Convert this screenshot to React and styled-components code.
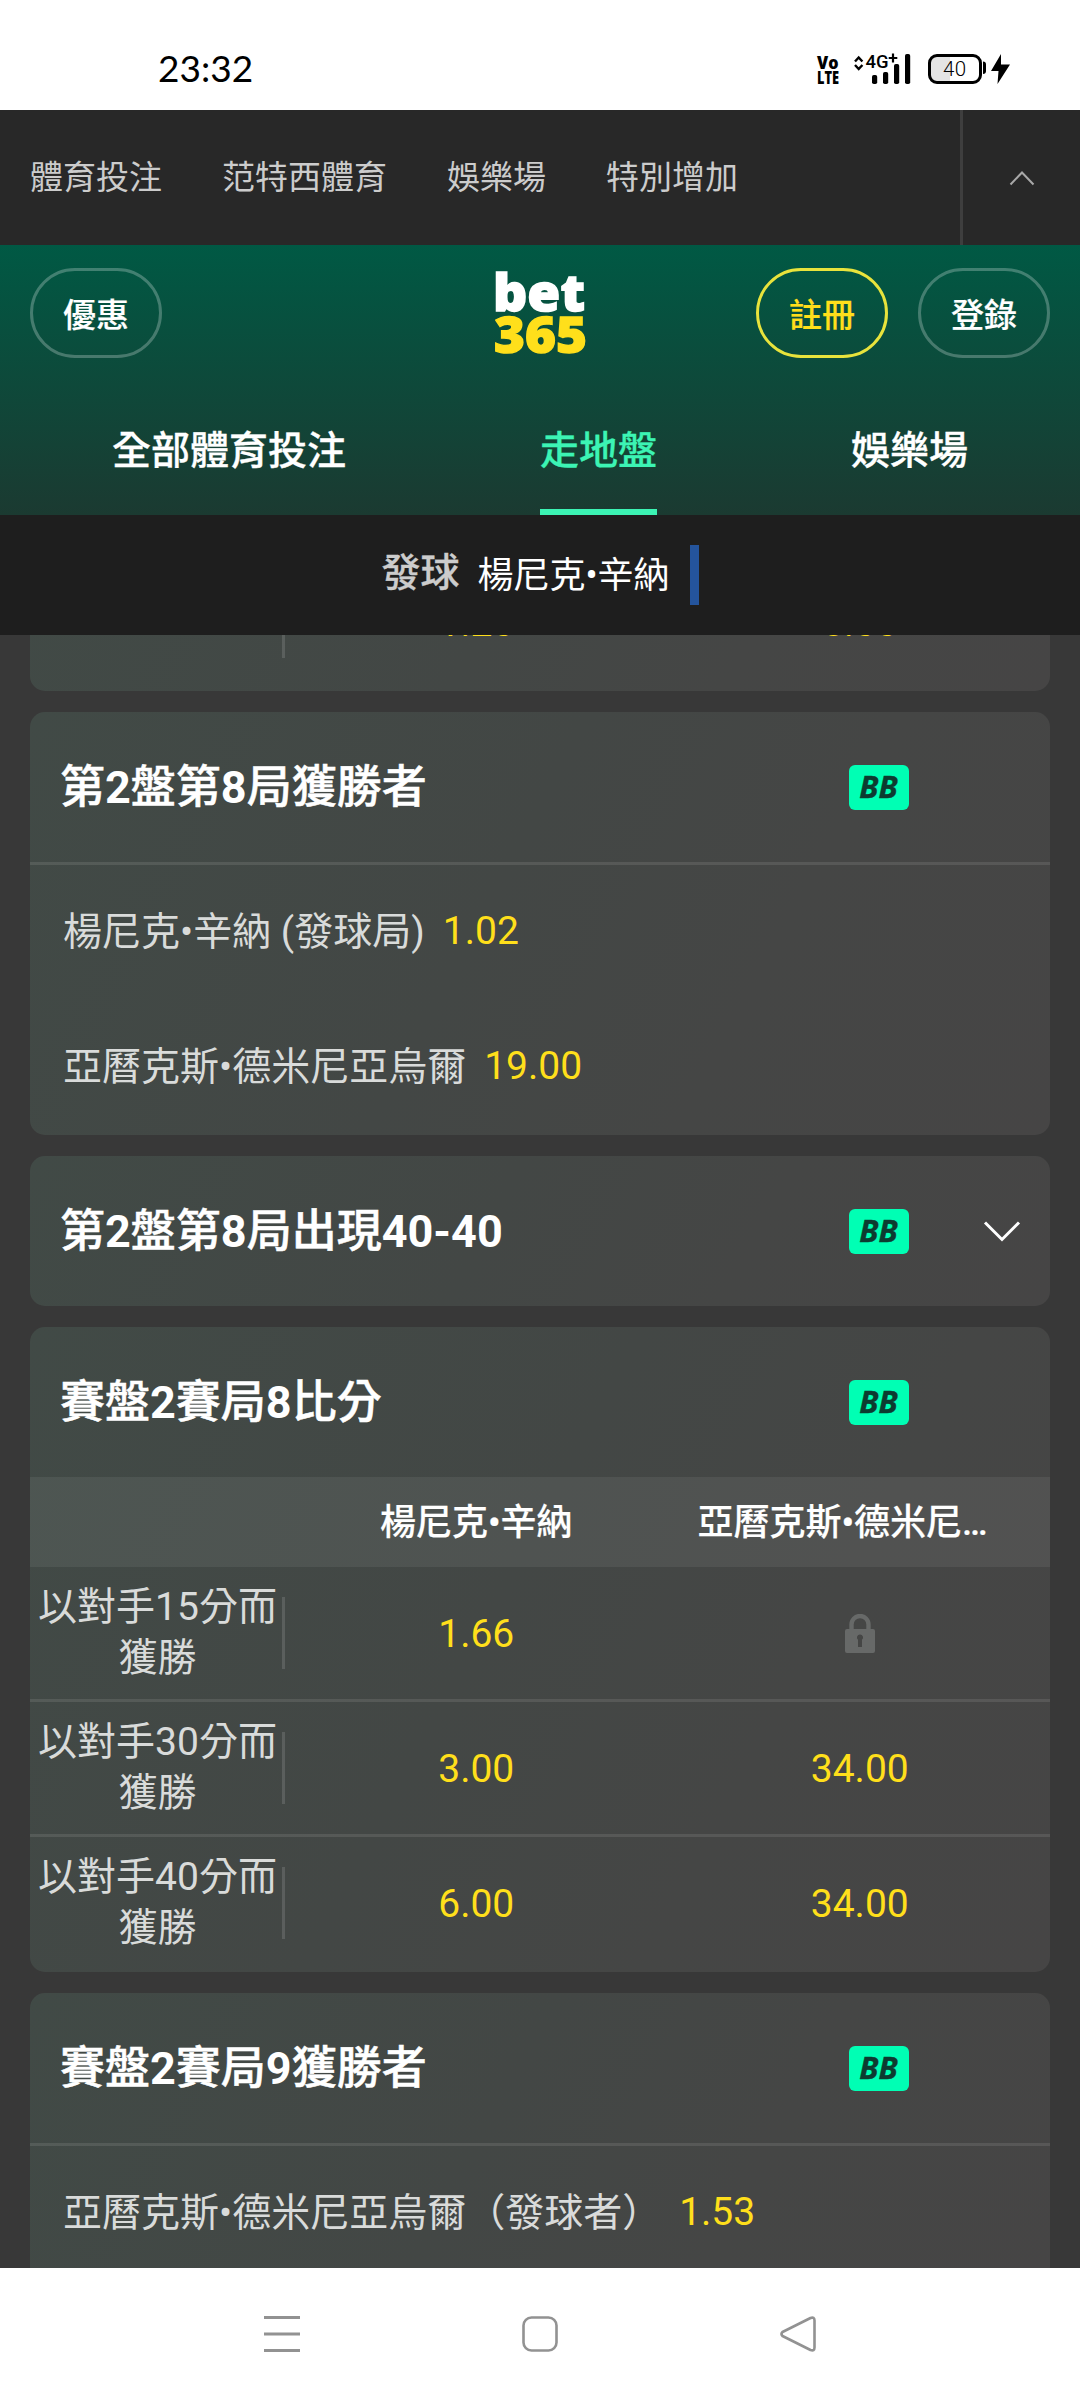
import styled, { createGlobalStyle } from "styled-components";

const topLinks = ["體育投注", "范特西體育", "娛樂場", "特別增加"];

const tabs = [
  { label: "全部體育投注" },
  { label: "走地盤", active: true },
  { label: "娛樂場" },
];

const scoreRows = [
  { label: "以對手15分而獲勝", home: "1.66", away: null },
  { label: "以對手30分而獲勝", home: "3.00", away: "34.00" },
  { label: "以對手40分而獲勝", home: "6.00", away: "34.00" },
];

function StatusIcons() {
  return (
    <StatusSvg width='200' height='36' viewBox='814 51 200 36'>
      <g fontFamily='Open Sans, sans-serif' fontWeight='800' fontSize='18'>
        <text x='817' y='68.500' textLength='21.5' lengthAdjust='spacingAndGlyphs'>
          Vo
        </text>
        <text x='817' y='84' textLength='22' lengthAdjust='spacingAndGlyphs'>
          LTE
        </text>
      </g>
      <g fill='none' stroke='#000' strokeWidth='2.4'>
        <path d='M855 61.5l3.7-4 3.7 4M855 65l3.7 4 3.7-4' />
      </g>
      <text
        x='865.5'
        y='68'
        fontFamily='Roboto, sans-serif'
        fontWeight='500'
        fontSize='19'
        textLength='23'
        lengthAdjust='spacingAndGlyphs'
      >
        4G
      </text>
      <path d='M893 53.5v9M888.7 58h8.6' stroke='#000' strokeWidth='2.2' />
      <rect x='872' y='75' width='5.2' height='9' rx='1.8' />
      <rect x='883' y='72' width='5.2' height='12' rx='1.8' />
      <rect x='894' y='64' width='5.2' height='20' rx='1.8' />
      <rect x='905' y='54' width='5.2' height='30' rx='1.8' />
      <path d='M937 55h13v27h-13a7 7 0 0 1-7-7v-13a7 7 0 0 1 7-7z' fill='#e4e4e4' />
      <rect
        x='929.5'
        y='55.5'
        width='51'
        height='27'
        rx='7.5'
        fill='none'
        stroke='#000'
        strokeWidth='3'
      />
      <path d='M983 61.5q3 0 3 3v6.500q0 3-3 3z' />
      <text
        x='943'
        y='76'
        fontFamily='Roboto, sans-serif'
        fontWeight='300'
        fontSize='20.500'
        textLength='23'
      >
        40
      </text>
      <path d='M1001 54l-10 17h7.500l-1 13 12.500-19.500h-9z' />
    </StatusSvg>
  );
}

function Logo() {
  return (
    <LogoSvg width='96' height='90' viewBox='492 268 96 90'>
      <text
        x='493'
        y='311'
        fontSize='51'
        fill='#fff'
        stroke='#fff'
        textLength='92'
        lengthAdjust='spacingAndGlyphs'
      >
        bet
      </text>
      <text
        x='494'
        y='352.500'
        fontSize='49'
        fill='#ffdf1b'
        stroke='#ffdf1b'
        textLength='93'
        lengthAdjust='spacingAndGlyphs'
      >
        365
      </text>
    </LogoSvg>
  );
}

function LockIcon() {
  return (
    <svg width='30' height='39' viewBox='0 0 30 39' fill='#676968'>
      <path d='M6.500 17v-6.500a8.500 8.500 0 0 1 17 0V17' fill='none' stroke='#676968' strokeWidth='4.400' />
      <path
        fillRule='evenodd'
        d='M2 15h26a2 2 0 0 1 2 2v20a2 2 0 0 1-2 2H2a2 2 0 0 1-2-2V17a2 2 0 0 1 2-2zM15 20.500a3 3 0 0 0-2 5.300V33h4v-7.200a3 3 0 0 0-2-5.300z'
      />
    </svg>
  );
}

function MarketHeader({ title, collapsed }) {
  // numbers in a title are set heavier than the characters round them
  const parts = title.split(/(\d[\d-]*)/);

  return (
    <Header>
      <Title>{parts.map((part, i) => (i % 2 ? <b key={i}>{part}</b> : part))}</Title>
      <Badge>BB</Badge>
      <Toggle>
        {collapsed && (
          <svg width='38' height='24' viewBox='0 0 38 24'>
            <path d='M2 3.500l17 17 17-17' fill='none' stroke='#fff' strokeWidth='3' />
          </svg>
        )}
      </Toggle>
    </Header>
  );
}

function Selection({ name, odds }) {
  return (
    <SelectionRow>
      <SelectionName>{name}</SelectionName>
      <Odds>{odds}</Odds>
    </SelectionRow>
  );
}

function ScoreRow({ label, home, away }) {
  return (
    <TableRow>
      <RowLabel>{label}</RowLabel>
      <Rule />
      <Cell>
        <Odds>{home}</Odds>
      </Cell>
      <Cell>{away ? <Odds>{away}</Odds> : <LockIcon />}</Cell>
    </TableRow>
  );
}

export default function App() {
  return (
    <Screen>
      <GlobalStyle />
      <StatusBar>
        <Clock>23:32</Clock>
        <StatusIcons />
      </StatusBar>

      <TopNav>
        <TopLinks>
          {topLinks.map((link) => (
            <span key={link}>{link}</span>
          ))}
        </TopLinks>
        <CollapseButton>
          <svg width='26' height='16' viewBox='0 0 26 16'>
            <path d='M1.500 14.500L13 2.500l11.500 12' fill='none' stroke='#a8a8a8' strokeWidth='2' />
          </svg>
        </CollapseButton>
      </TopNav>

      <SiteHeader>
        <HeaderTop>
          <PillButton>優惠</PillButton>
          <Logo />
          <Account>
            <PillButton $highlight>註冊</PillButton>
            <PillButton>登錄</PillButton>
          </Account>
        </HeaderTop>
        <Tabs>
          {tabs.map((tab) => (
            <Tab key={tab.label} $active={tab.active}>
              {tab.label}
            </Tab>
          ))}
        </Tabs>
      </SiteHeader>

      <ServeBar>
        <ServeLabel>發球</ServeLabel>
        <ServeName>楊尼克•辛納</ServeName>
        <ServeMark />
      </ServeBar>

      <Feed>
        <Markets>
          <Card>
            <ScoreRow label='' home='1.20' away='5.00' />
          </Card>

          <Card>
            <MarketHeader title='第2盤第8局獲勝者' />
            <Divider />
            <Selection name='楊尼克•辛納 (發球局)' odds='1.02' />
            <Selection name='亞曆克斯•德米尼亞烏爾' odds='19.00' />
          </Card>

          <Card>
            <MarketHeader title='第2盤第8局出現40-40' collapsed />
          </Card>

          <Card>
            <MarketHeader title='賽盤2賽局8比分' />
            <TableHead>
              <HeadCell />
              <HeadCell>楊尼克•辛納</HeadCell>
              <HeadCell $truncated>亞曆克斯•德米尼…</HeadCell>
            </TableHead>
            {scoreRows.map((row) => (
              <ScoreRow key={row.label} {...row} />
            ))}
          </Card>

          <Card>
            <MarketHeader title='賽盤2賽局9獲勝者' />
            <Divider />
            <Selection name='亞曆克斯•德米尼亞烏爾（發球者）' odds='1.53' />
          </Card>
        </Markets>
      </Feed>

      <SystemNav>
        <svg width='36' height='36' viewBox='0 0 36 36' stroke='#929292' strokeWidth='3'>
          <path d='M0 1.500h36M0 18h36M0 34.500h36' />
        </svg>
        <svg width='36' height='36' viewBox='0 0 36 36' fill='none' stroke='#929292' strokeWidth='2.600'>
          <rect x='1.500' y='1.500' width='33' height='33' rx='8' />
        </svg>
        <svg
          width='36'
          height='36'
          viewBox='0 0 36 36'
          fill='none'
          stroke='#929292'
          strokeWidth='2.600'
          strokeLinejoin='round'
        >
          <path d='M2.500 16L30.500 2q4-1.500 4 2.500v27q0 4-4 2.500L2.500 20q-2-2 0-4z' />
        </svg>
      </SystemNav>
    </Screen>
  );
}

const GlobalStyle = createGlobalStyle`
  * {
    box-sizing: border-box;
  }

  body {
    margin: 0;
    background: #383838;
    font-family: Roboto, "Noto Sans CJK TC", sans-serif;
  }

  svg {
    display: block;
  }
`;

const Screen = styled.div`
  display: flex;
  flex-direction: column;
  width: 1080px;
  height: 2400px;
  overflow: hidden;
`;

const StatusBar = styled.div`
  display: flex;
  align-items: center;
  justify-content: space-between;
  height: 110px;
  padding: 28px 66px 0 158px;
  background: #fff;
  color: #000;
`;

const StatusSvg = styled.svg`
  overflow: visible;
`;

const Clock = styled.span`
  padding-bottom: 2px;
  font-family: Lato, sans-serif;
  font-size: 37px;
  line-height: 40px;
`;

const TopNav = styled.nav`
  display: flex;
  height: 135px;
  background: #282828;
`;

const TopLinks = styled.div`
  display: flex;
  flex: 1;
  align-items: center;
  gap: 60px;
  padding: 0 0 6px 30px;
  color: #ccc;
  font-size: 33px;
`;

const CollapseButton = styled.div`
  display: flex;
  align-items: center;
  justify-content: center;
  width: 120px;
  border-left: 3px solid #3e3e3e;
`;

const SiteHeader = styled.header`
  height: 270px;
  background: linear-gradient(#005944, #1b3a31);
`;

const HeaderTop = styled.div`
  display: grid;
  grid-template-columns: 1fr auto 1fr;
  align-items: center;
  height: 135px;
  padding: 0 30px;
`;

const LogoSvg = styled.svg`
  overflow: visible;
  font-family: "Open Sans", sans-serif;
  font-weight: 800;
  stroke-width: 1.4px;
`;

const Account = styled.div`
  display: flex;
  justify-content: flex-end;
  gap: 30px;
`;

const PillButton = styled.div`
  display: flex;
  align-items: center;
  justify-content: center;
  width: 132px;
  height: 90px;
  border: 3px solid ${(props) => (props.$highlight ? "#e8e33c" : "rgba(255, 255, 255, 0.25)")};
  border-radius: 45px;
  color: ${(props) => (props.$highlight ? "#ffdf1b" : "#fff")};
  font-size: 33px;
  font-weight: 500;
  -webkit-text-stroke: 0.2px;
`;

const Tabs = styled.div`
  display: flex;
  justify-content: space-between;
  height: 135px;
  padding: 0 112px;
`;

const Tab = styled.div`
  height: 135px;
  border-bottom: 6px solid ${(props) => (props.$active ? "#3cf4b4" : "transparent")};
  color: ${(props) => (props.$active ? "#3cf4b4" : "#fff")};
  font-size: 39px;
  font-weight: 500;
  line-height: 142px;
  -webkit-text-stroke: 0.3px;
`;

const ServeBar = styled.div`
  display: flex;
  align-items: center;
  justify-content: center;
  height: 120px;
  background: #1e1e1e;
`;

const ServeLabel = styled.span`
  margin-right: 18px;
  padding-bottom: 12px;
  color: #ccc;
  font-size: 39px;
  font-weight: 500;
  -webkit-text-stroke: 0.3px;
`;

const ServeName = styled.span`
  padding-bottom: 6px;
  color: #fff;
  font-size: 36px;
`;

const ServeMark = styled.span`
  width: 9px;
  height: 60px;
  margin-left: 20px;
  background: #24549c;
`;

const Feed = styled.main`
  height: 1633px;
  overflow: hidden;
`;

/* the list is scrolled so that only the foot of the first card shows */
const Markets = styled.div`
  display: flex;
  flex-direction: column;
  gap: 21px;
  margin-top: -79px;
  padding: 0 30px;
`;

const Card = styled.section`
  overflow: hidden;
  border-radius: 15px;
  background: linear-gradient(118deg, #414a46, #434745 45%, #454645 70%, #464545);
`;

const Header = styled.div`
  display: flex;
  align-items: center;
  height: 150px;
  padding-left: 30px;
`;

const Title = styled.h2`
  flex: 1;
  margin: 0;
  padding-bottom: 8px;
  color: #fff;
  font-size: 45px;
  font-weight: 500;
  -webkit-text-stroke: 0.5px;

  b {
    font-weight: 700;
    -webkit-text-stroke: 0;
  }
`;

const Badge = styled.span`
  width: 60px;
  height: 45px;
  padding-right: 1px;
  border-radius: 6px;
  background: #00ffb4;
  color: #0c3b30;
  font-family: "Noto Sans", sans-serif;
  font-size: 31px;
  font-style: italic;
  font-weight: 700;
  line-height: 43px;
  text-align: center;
  -webkit-text-stroke: 0.4px;
`;

const Toggle = styled.div`
  display: flex;
  justify-content: flex-end;
  width: 141px;
  padding-right: 29px;
`;

const Divider = styled.div`
  height: 3px;
  background: rgba(255, 255, 255, 0.1);
`;

const SelectionRow = styled.div`
  display: flex;
  align-items: center;
  gap: 18px;
  height: 135px;
  padding: 0 0 3px 33px;
`;

const SelectionName = styled.span`
  padding-bottom: 7px;
  color: #d9dbda;
  font-size: 39px;
`;

const Odds = styled.span`
  color: #ffdf1b;
  font-size: 39px;
`;

const TableHead = styled.div`
  display: grid;
  grid-template-columns: 255px 1fr 1fr;
  align-items: center;
  height: 90px;
  background: rgba(255, 255, 255, 0.065);
`;

const HeadCell = styled.span`
  padding: 0 0 6px ${(props) => (props.$truncated ? "30px" : "0")};
  color: #fff;
  font-size: 36px;
  font-weight: 500;
  text-align: ${(props) => (props.$truncated ? "left" : "center")};
  white-space: nowrap;
  -webkit-text-stroke: 0.2px;
`;

const TableRow = styled.div`
  display: grid;
  grid-template-columns: 252px 3px 1fr 1fr;
  align-items: start;
  height: 135px;
  border-bottom: 3px solid rgba(255, 255, 255, 0.1);

  &:last-child {
    border-bottom-color: transparent;
  }
`;

const RowLabel = styled.div`
  padding: 15px 0 0 3px;
  color: #d9dbda;
  font-size: 39px;
  line-height: 51px;
  text-align: center;
`;

const Rule = styled.div`
  height: 72px;
  margin-top: 30px;
  background: rgba(255, 255, 255, 0.13);
`;

const Cell = styled.div`
  display: flex;
  align-items: center;
  justify-content: center;
  height: 132px;
  padding-top: 1px;

  &:last-child {
    padding-left: 2px;
  }
`;

const SystemNav = styled.div`
  display: flex;
  align-items: center;
  justify-content: center;
  gap: 222px;
  height: 132px;
  background: #fff;
`;
